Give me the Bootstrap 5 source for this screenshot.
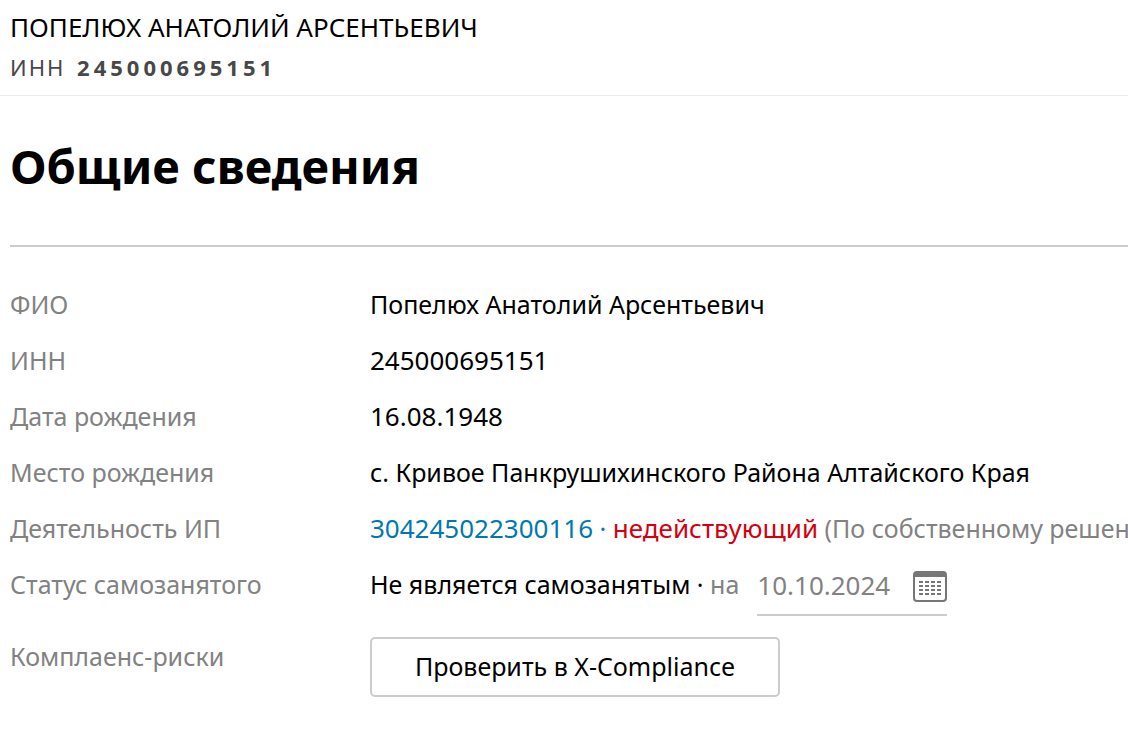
<!DOCTYPE html>
<html lang="ru">
<head>
<meta charset="utf-8">
<meta name="viewport" content="width=device-width, initial-scale=1">
<title>Общие сведения</title>
<link rel="stylesheet" href="https://cdn.jsdelivr.net/npm/bootstrap@5.3.0/dist/css/bootstrap.min.css">
<style>
body{font-family:"Noto Sans","Open Sans",sans-serif;font-size:25px;line-height:32px;color:#000;background:#fff;overflow-x:hidden}
.person-bar{padding:9px 10px 6px;border-bottom:1px solid #ececec}
.person-name{font-size:26px;line-height:36px}
.person-inn{font-size:22px;line-height:44px;color:#484848;letter-spacing:2px}
.person-inn strong{letter-spacing:4px;margin-left:4px}
.sheet{padding-left:10px}
.page-title{font-size:47px;line-height:60px;font-weight:700;padding:40px 0 49px;border-bottom:2px solid #ccc}
.facts{display:grid;grid-template-columns:360px 1fr;row-gap:24px;padding-top:41px}
.facts dt{font-weight:400;color:#828282}
.facts dd{white-space:nowrap}
.digits{font-size:26px}
.ogrn{color:#0079b0}
.inactive{color:#d4000f}
.soft{color:#828282}
.date-field{width:190px;height:48px;border-bottom:2px solid #ccc;margin-left:18px}
.date-field input{width:148px;height:34px;color:#828282;font-family:inherit}
.date-field svg{display:block;margin-top:3px}
.btn-check-risk{width:410px;height:60px;border:2px solid #ccc;border-radius:5px;font-size:25px;color:#000;margin-top:-3px}
</style>
</head>
<body>
<header class="person-bar">
<div class="person-name">ПОПЕЛЮХ АНАТОЛИЙ АРСЕНТЬЕВИЧ</div>
<div class="person-inn">ИНН <strong>245000695151</strong></div>
</header>
<main class="sheet">
<h1 class="page-title mb-0">Общие сведения</h1>
<dl class="facts mb-0">
<dt>ФИО</dt><dd class="mb-0">Попелюх Анатолий Арсентьевич</dd>
<dt>ИНН</dt><dd class="digits mb-0">245000695151</dd>
<dt>Дата рождения</dt><dd class="digits mb-0">16.08.1948</dd>
<dt>Место рождения</dt><dd class="mb-0">с. Кривое Панкрушихинского Района Алтайского Края</dd>
<dt>Деятельность ИП</dt><dd class="mb-0"><a class="ogrn text-decoration-none" href="#"><span class="digits">304245022300116</span> ·</a> <span class="inactive digits">недействующий</span> <span class="soft">(По собственному решению)</span></dd>
<dt><label for="statusDate">Статус самозанятого</label></dt>
<dd class="d-flex align-items-start mb-0">
<span>Не является самозанятым · <span class="soft">на</span></span>
<span class="date-field d-flex justify-content-between">
<input id="statusDate" class="digits border-0 bg-transparent p-0" type="text" value="10.10.2024">
<svg width="34" height="32" viewBox="0 0 34 32" fill="none" aria-hidden="true">
<rect x="1" y="1" width="32" height="29" rx="3" stroke="#777" stroke-width="2"/>
<path d="M1 6V4a3 3 0 0 1 3-3h26a3 3 0 0 1 3 3v2z" fill="#777"/>
<path d="M6 11h23M6 15h23M6 19h23M6 23h23" stroke="#777" stroke-width="2" stroke-dasharray="4 2"/>
</svg>
</span>
</dd>
<dt>Комплаенс-риски</dt><dd class="mb-0"><button type="button" class="btn btn-check-risk">Проверить в X-Compliance</button></dd>
</dl>
</main>
<script src="https://cdn.jsdelivr.net/npm/bootstrap@5.3.0/dist/js/bootstrap.bundle.min.js"></script>
</body>
</html>
